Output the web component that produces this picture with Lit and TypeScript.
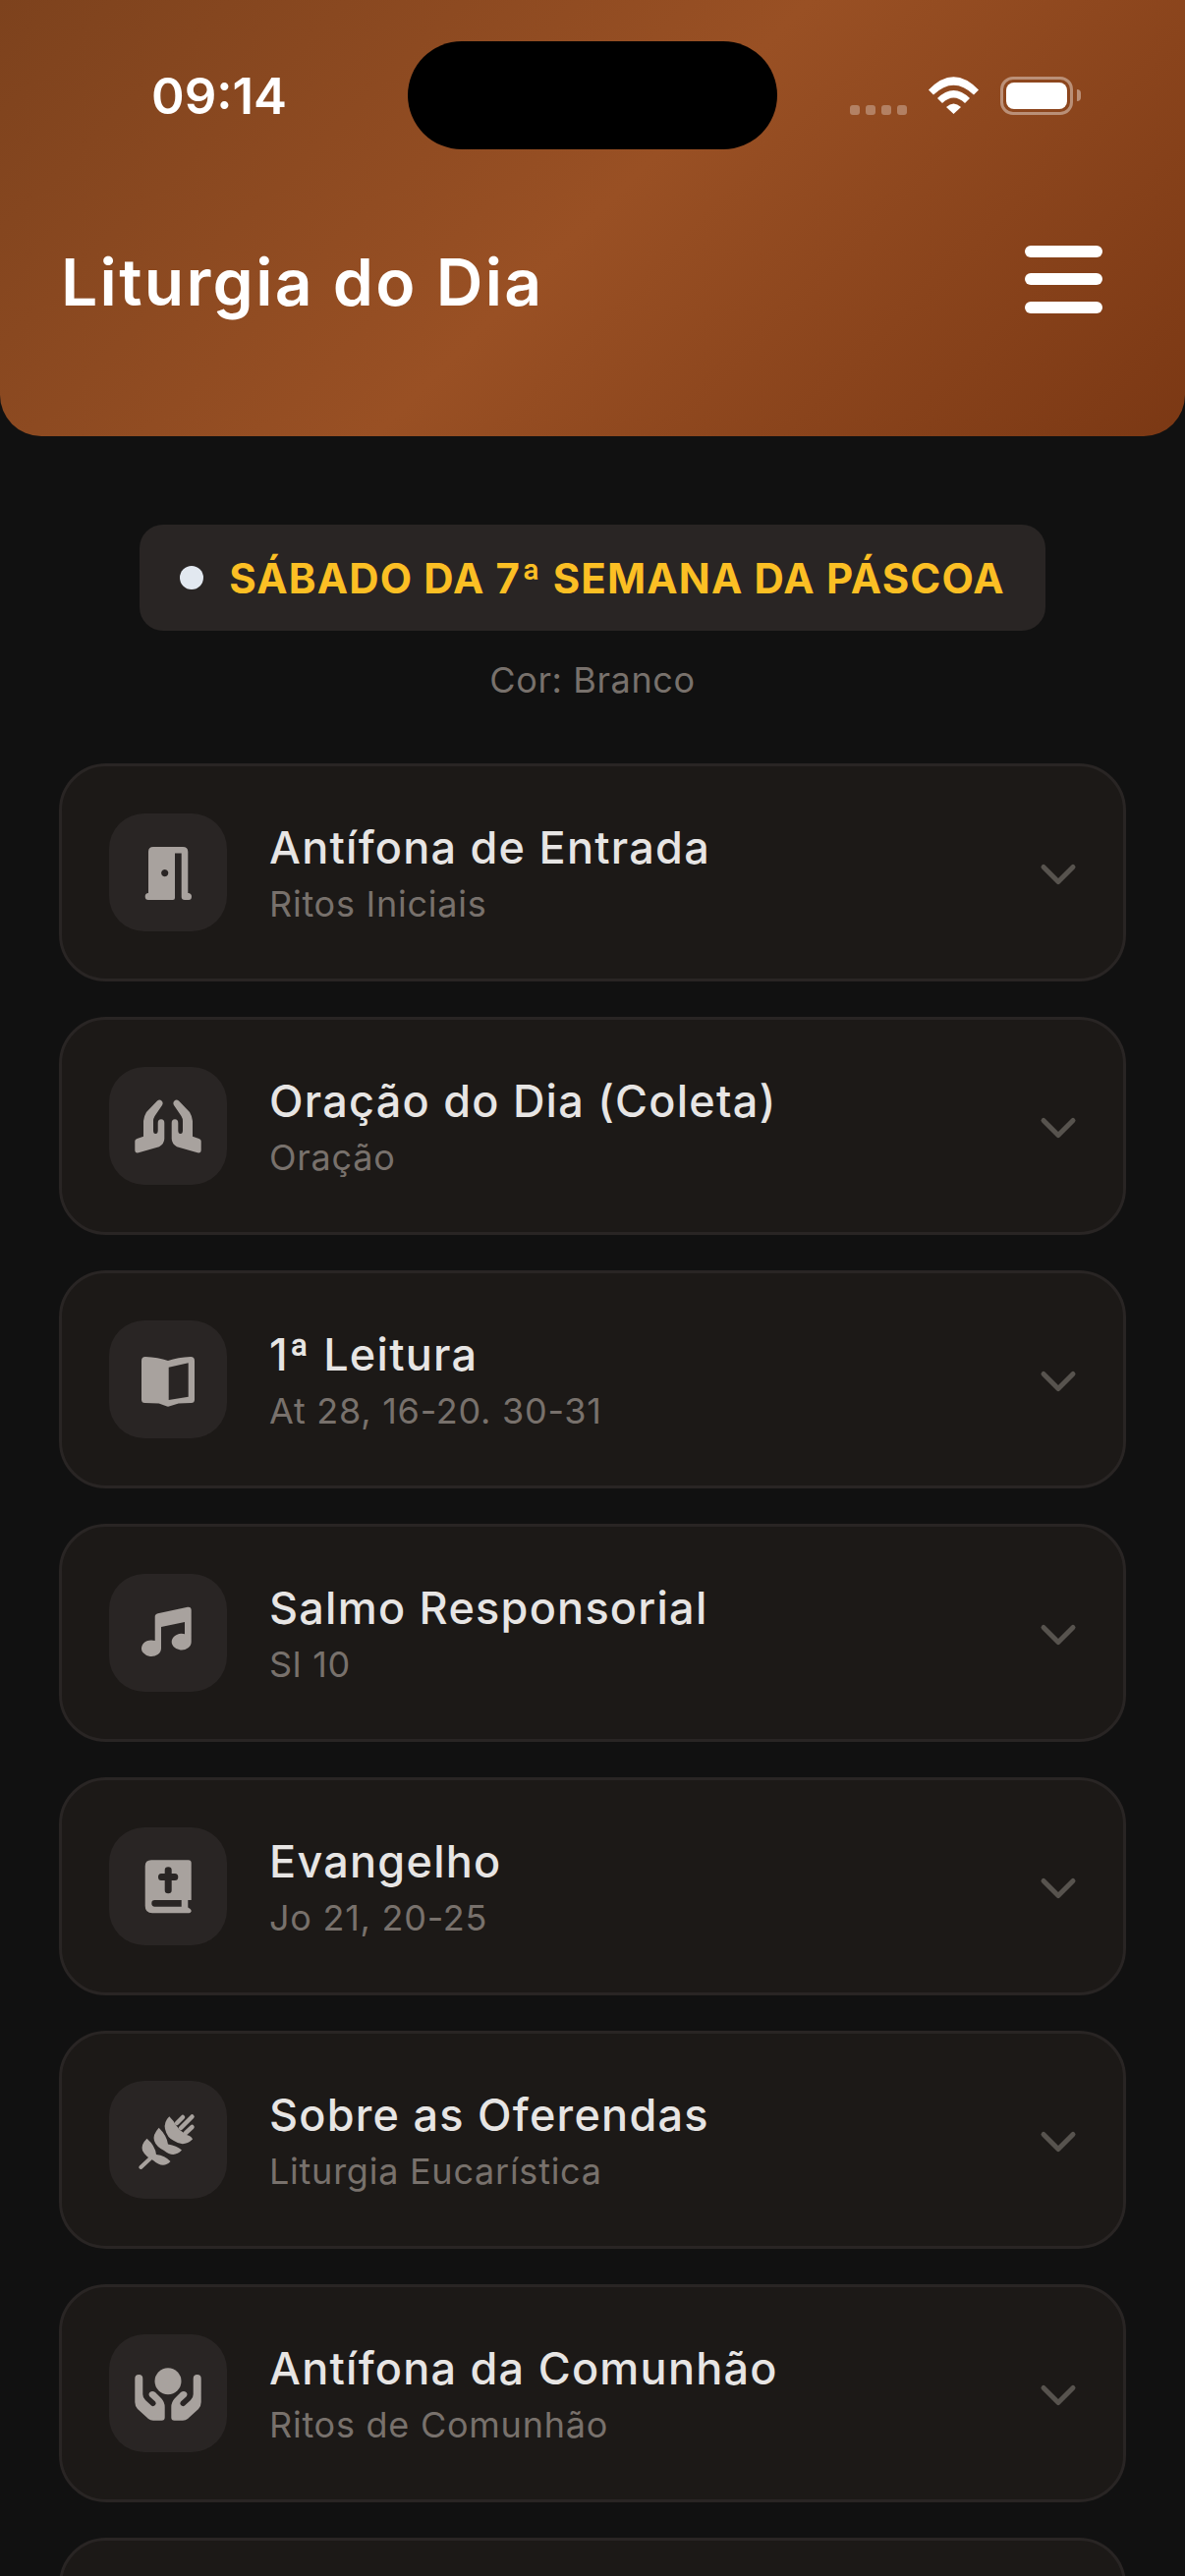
import { LitElement, html, css, svg } from 'lit';
import { customElement } from 'lit/decorators.js';

// glyphs share a 120x120 box, the same size as the tile they sit on
const LEFT_PRAY =
  'M49 34.500 Q51.500 32.500 53.500 34.500 Q55.500 36.500 54 39 L46.500 50 Q45 52.500 45 55 V64.500 Q45 68 47.300 68 Q49.700 68 49.700 64.500 V57 Q49.700 53.300 53 53.300 Q56.300 53.300 56.300 57 V73 Q56.300 78 51 81.300 L30 87.300 Q26.300 88 26.300 84.500 V75.500 Q26.300 73.500 28.500 73 L35 70.700 V55 Q35.500 50 38 46 Z';
const LEFT_HOLD =
  'M26.300 45 Q26.300 41 30.300 41 Q34.300 41 34.300 45 V61 Q34.300 64.500 37 67 L43 72.500 Q45 74 47 72 Q48.500 70 47 68.500 L41.500 63.500 Q39.500 61 41.500 59 Q44 57 47 59 L53 65 Q56.700 69 56.700 74 V84.500 Q56.700 87.700 53.500 87.700 H45 Q42 87.700 40 86 L29 76 Q26.300 73 26.300 69 Z';

const ICONS: Record<string, unknown> = {
  door: svg`<path fill-rule="evenodd" d="M40 39 Q40 34 45 34 H75 Q80.300 34 80.300 39 V81 H81 Q84 81.500 84 84.500 Q84 88 81 88 H77 Q73.700 88 73.700 85 V40.500 H67 V86 Q67 88 65 88 H40 Q36.700 88 36.700 84.500 Q36.700 81 40 81 Z M56.700 57 a3.600 3.600 0 1 0 .01 0 Z"/>`,
  hands: svg`<path d=${LEFT_PRAY}/><path d=${LEFT_PRAY} transform="translate(120 0) scale(-1 1)"/>`,
  book: svg`<path fill-rule="evenodd" d="M33 41 Q33 37 37 37 Q50 37.500 60 41 Q70 37.500 83 37 Q87 37 87 41 V80.500 Q87 84 83.500 84 Q76 84 70.700 84.500 L61 87.500 Q60 87.800 59 87.500 L50.700 84.500 Q44 84 36.500 84 Q33 84 33 80.500 Z M60.700 47.700 V81 L80.700 77.700 V43.300 Z"/>`,
  music: svg`<path d="M80 33.700 Q83.700 33.300 83.700 37 V69 A10 8.300 0 1 1 77 61.300 V49 L53 54 V75.700 A10 8.300 0 1 1 46.700 68 V43.500 Q46.700 41 49.700 40.300 Z"/>`,
  bible: svg`<path fill-rule="evenodd" d="M43 33.300 H80.700 Q83.700 33.300 83.700 36.300 V74 H80.300 V81 Q80.300 82 82 82.500 Q84 84 83.700 85.500 Q83 87.300 81.500 87.300 H44 Q36.700 87.300 36.700 80 V39.500 Q36.700 33.300 43 33.300 Z M56.700 43.500 V47 H53 Q50 47 50 50.500 Q50 54 53 54 H56.700 V64 Q56.700 67.300 60.200 67.300 Q63.700 67.300 63.700 64 V54 H67 Q70.300 54 70.300 50.500 Q70.300 47 67 47 H63.700 V43.500 Q63.700 40.300 60.200 40.300 Q56.700 40.300 56.700 43.500 Z M46.500 74 Q43.300 74 43.300 77.300 Q43.300 80.700 46.500 80.700 H73.700 V74 Z"/>`,
  wheat: svg`
    <path d="M38.500 58.700 Q32 65 34 71 Q37 77 45 81 Q55 90 62.500 82 Q57 76 48 75 Q47 66 38.500 58.700 Z"/>
    <path d="M50.700 47.700 Q44 55 46 61 Q48 67 56 71 Q66 79 74 70.500 Q69 66 60 64.500 Q59 56 50.700 47.700 Z"/>
    <path d="M61.300 36.300 Q55.500 42 57 49 Q59 58 66 61 Q76 68 85 59.500 Q84 56 79 55 L72 50 L68 45 Q66 41 61.300 36.300 Z"/>
    <g fill="none" stroke="currentColor" stroke-linecap="round">
      <path stroke-width="4" d="M32.300 88 L43 78"/>
      <path stroke-width="4.500" d="M69 43 L75 37 M73 48 L84.500 36.500 M78 53 L84.500 47"/>
    </g>`,
  hold: svg`<circle cx="60" cy="47.700" r="13.500"/><path d=${LEFT_HOLD}/><path d=${LEFT_HOLD} transform="translate(120 0) scale(-1 1)"/>`,
};

const ITEMS = [
  { icon: 'door', title: 'Antífona de Entrada', sub: 'Ritos Iniciais' },
  { icon: 'hands', title: 'Oração do Dia (Coleta)', sub: 'Oração' },
  { icon: 'book', title: '1ª Leitura', sub: 'At 28, 16-20. 30-31' },
  { icon: 'music', title: 'Salmo Responsorial', sub: 'Sl 10' },
  { icon: 'bible', title: 'Evangelho', sub: 'Jo 21, 20-25' },
  { icon: 'wheat', title: 'Sobre as Oferendas', sub: 'Liturgia Eucarística' },
  { icon: 'hold', title: 'Antífona da Comunhão', sub: 'Ritos de Comunhão' },
];

@customElement('app-root')
export class AppRoot extends LitElement {
  static styles = css`
    :host {
      display: block;
      width: 1206px;
      height: 2622px;
      overflow: hidden;
      background: #111111;
      font-family: Inter, "Noto Sans", sans-serif;
    }

    .header {
      height: 444px;
      box-sizing: border-box;
      border-radius: 0 0 42px 42px;
      background: linear-gradient(135deg, #7d421d 0%, #995024 50%, #7b3814 100%);
      color: #fff;
      padding: 42px 0 0;
    }

    .status {
      display: flex;
      align-items: center;
      height: 110px;
    }

    .time {
      width: 415px;
      box-sizing: border-box;
      padding-left: 154px;
      font-size: 51px;
      font-weight: 600;
    }

    .island {
      width: 376px;
      height: 110px;
      border-radius: 55px;
      background: #000;
    }

    .status-right {
      display: flex;
      align-items: center;
      padding-left: 74px;
      height: 40px;
    }

    .dots {
      display: flex;
      gap: 6px;
      align-self: flex-end;
      margin-right: 22px;
    }

    .dots i {
      width: 10px;
      height: 10px;
      border-radius: 3px;
      background: rgba(255, 255, 255, 0.3);
    }

    .battery {
      display: flex;
      align-items: center;
      margin-left: 22px;
    }

    .battery-body {
      width: 74px;
      height: 39px;
      box-sizing: border-box;
      border: 3px solid rgba(255, 255, 255, 0.4);
      border-radius: 13px;
      padding: 3px;
    }

    .battery-body i {
      display: block;
      height: 100%;
      border-radius: 8px;
      background: #fff;
    }

    .battery-cap {
      width: 4px;
      height: 12px;
      margin-left: 4px;
      border-radius: 0 4px 4px 0;
      background: rgba(255, 255, 255, 0.4);
    }

    .bar {
      display: flex;
      align-items: center;
      justify-content: space-between;
      padding: 95px 84px 0 62px;
    }

    h1 {
      margin: 0;
      font-size: 66px;
      font-weight: 600;
      letter-spacing: 2.3px;
    }

    .menu {
      display: flex;
      flex-direction: column;
      gap: 16.5px;
      margin-top: -6px;
    }

    .menu i {
      display: block;
      width: 79px;
      height: 12px;
      border-radius: 6px;
      background: #fff;
    }

    .season {
      display: flex;
      flex-direction: column;
      align-items: center;
      padding-top: 90px;
    }

    .pill {
      display: flex;
      align-items: center;
      gap: 26px;
      height: 108px;
      box-sizing: border-box;
      padding: 0 41px;
      border-radius: 24px;
      background: #292524;
      color: #fbbf24;
      font-size: 42px;
      font-weight: 700;
      letter-spacing: 1.15px;
    }

    .pill i {
      width: 24px;
      height: 24px;
      border-radius: 50%;
      background: #e2e8f0;
    }

    .color {
      margin-top: 28px;
      font-size: 36px;
      letter-spacing: 0.6px;
      color: #78716c;
    }

    .list {
      display: flex;
      flex-direction: column;
      gap: 36px;
      padding: 63px 60px 0;
    }

    .card {
      display: flex;
      align-items: center;
      gap: 43px;
      height: 222px;
      flex: none;
      box-sizing: border-box;
      padding: 0 48px;
      border: 3px solid #292524;
      border-radius: 48px;
      background: #1c1917;
    }

    .icon {
      width: 120px;
      height: 120px;
      flex: none;
      border-radius: 36px;
      background: #292524;
      color: #a8a29e;
    }

    .icon svg {
      display: block;
      width: 120px;
      height: 120px;
      fill: currentColor;
    }

    .text {
      flex: 1;
      padding-top: 4px;
    }

    .title {
      font-size: 45px;
      font-weight: 500;
      letter-spacing: 1.25px;
      color: #e7e5e4;
      line-height: 54px;
    }

    .sub {
      margin-top: 6px;
      font-size: 36px;
      letter-spacing: 0.75px;
      color: #78716c;
      line-height: 48px;
    }

    .chevron {
      width: 60px;
      height: 60px;
      margin: 3px -11.5px 0 0;
      flex: none;
      fill: none;
      stroke: #57534e;
      stroke-width: 2;
      stroke-linecap: round;
      stroke-linejoin: round;
    }
  `;

  renderStatus() {
    return html`
      <div class="status">
        <div class="time">09:14</div>
        <div class="island"></div>
        <div class="status-right">
          <div class="dots"><i></i><i></i><i></i><i></i></div>
          <svg width="51" height="38" viewBox="0 0 51 38" fill="#fff">
            <path d="M0 13.500 Q25.500 -13 51 13.500 L46 18.500 Q25.500 -1 5 18.500 Z" />
            <path d="M9 22 Q25.500 6 42 22 L37 27 Q25.500 16 14 27 Z" />
            <path d="M18 31 Q25.500 24 33 31 L25.500 38 Z" />
          </svg>
          <div class="battery">
            <div class="battery-body"><i></i></div>
            <div class="battery-cap"></div>
          </div>
        </div>
      </div>
    `;
  }

  render() {
    return html`
      <div class="header">
        ${this.renderStatus()}
        <div class="bar">
          <h1>Liturgia do Dia</h1>
          <div class="menu"><i></i><i></i><i></i></div>
        </div>
      </div>
      <div class="season">
        <div class="pill"><i></i>SÁBADO DA 7ª SEMANA DA PÁSCOA</div>
        <div class="color">Cor: Branco</div>
      </div>
      <div class="list">
        ${ITEMS.map(
          (item) => html`
            <div class="card">
              <div class="icon">
                <svg viewBox="0 0 120 120">${ICONS[item.icon]}</svg>
              </div>
              <div class="text">
                <div class="title">${item.title}</div>
                <div class="sub">${item.sub}</div>
              </div>
              <svg class="chevron" viewBox="0 0 24 24"><path d="M6 9l6 6 6-6" /></svg>
            </div>
          `
        )}
        <div class="card"></div>
      </div>
    `;
  }
}
